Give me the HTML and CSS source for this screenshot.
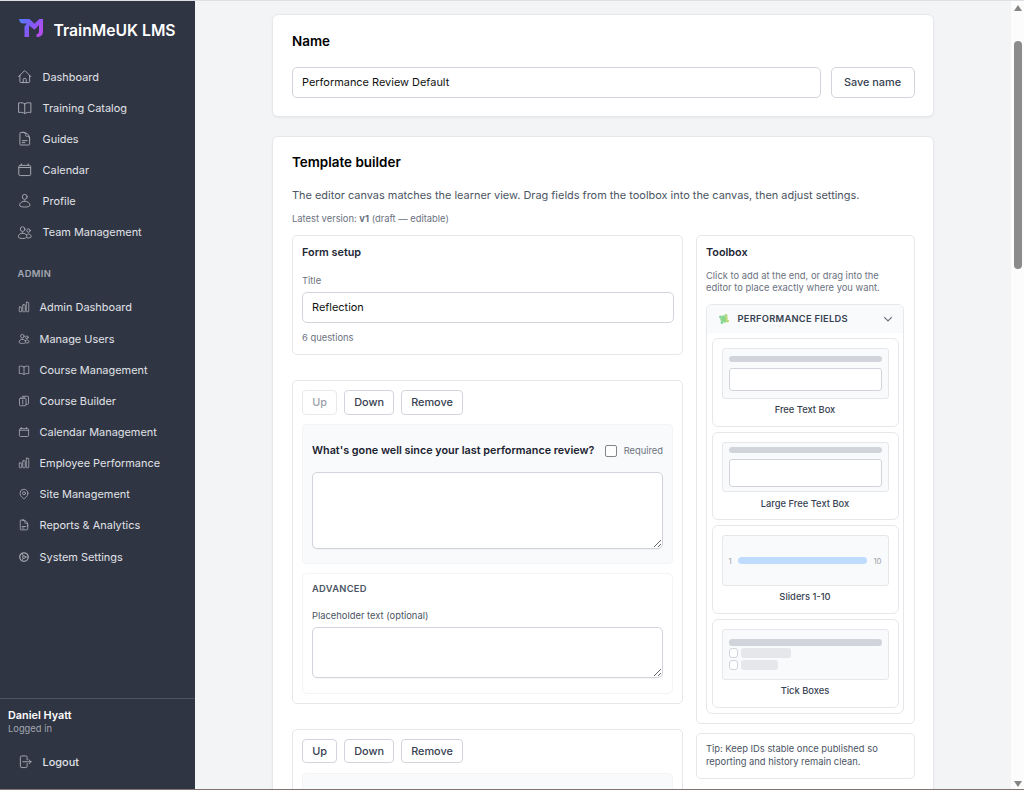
FILE: index.html
```html
<!DOCTYPE html>
<html lang="en">
<head>
    <meta charset="UTF-8">
    <meta name="viewport" content="width=device-width, initial-scale=1.0">
    <title>TrainMeUK LMS - Template builder</title>
    <link rel="stylesheet" href="styles.css">
</head>
<body>
    <!-- Icons -->
    <svg class="sprite" xmlns="http://www.w3.org/2000/svg">
        <symbol id="home" viewBox="0 0 24 24"><path d="M2.3 12 11.2 3q.8-.7 1.6 0l8.9 9M4.5 9.800v10q0 1.200 1.200 1.200h4v-5q0-1.200 1.200-1.200h2.200q1.200 0 1.200 1.200v5h4q1.200 0 1.200-1.200v-10M8.200 21h8.200"/></symbol>
        <symbol id="book" viewBox="0 0 24 24"><path d="M12 6C10 4.500 6 3.700 2.500 4.500v14.800C6 18.500 10 19.300 12 21c2-1.700 6-2.500 9.500-1.700V4.500C18 3.700 14 4.500 12 6zv15"/></symbol>
        <symbol id="doc" viewBox="0 0 24 24"><path d="M19.500 14.200v-2.600a3.400 3.400 0 0 0-3.400-3.400h-1.500a1.100 1.100 0 0 1-1.100-1.100V5.600a3.400 3.400 0 0 0-3.400-3.400H8.200M8.200 15h7.500m-7.500 3H12M10.500 2.200H5.600c-.6 0-1.100.5-1.100 1.100v17.300c0 .6.500 1.100 1.100 1.100h12.800c.6 0 1.100-.5 1.100-1.100v-9.400a9 9 0 0 0-9-9z"/></symbol>
        <symbol id="calendar" viewBox="0 0 24 24"><path d="M6.700 3v2.200M17.300 3v2.200M3 8.500h18M5 5.200h14q2.200 0 2.200 2.200v11.400q0 2.200-2.200 2.200H5q-2.200 0-2.200-2.200V7.400Q2.800 5.200 5 5.200z"/></symbol>
        <symbol id="user" viewBox="0 0 24 24"><circle cx="12" cy="6" r="3.800"/><path d="M12 12.600c-4.500 0-8 3-8 6.500 0 1.700 3.500 2.600 8 2.600s8-.9 8-2.600c0-3.500-3.500-6.500-8-6.500z"/></symbol>
        <symbol id="users" viewBox="0 0 24 24"><circle cx="8.700" cy="6.400" r="3.600"/><circle cx="17.800" cy="8.600" r="2.600"/><path d="M8.700 12.500c-3.700 0-6.600 2.500-6.600 5.700 0 3.600 13.200 3.600 13.200 0 0-3.200-2.900-5.700-6.600-5.700zM16 20c3 .2 6-.2 6-2 0-2.300-2-4-4.200-4q-1.800 0-3.200 1.200"/></symbol>
        <symbol id="chart" viewBox="0 0 24 24"><rect x="2.500" y="12" width="5" height="9.500" rx="1"/><rect x="9.500" y="7.500" width="5" height="14" rx="1"/><rect x="16.500" y="2.500" width="5" height="19" rx="1"/></symbol>
        <symbol id="builder" viewBox="0 0 24 24"><path d="M8 6.500V4.200q0-1.700 1.700-1.700h9.600Q21 2.500 21 4.200v12.600q0 1.700-1.700 1.700H16M4.500 6.500h9.800q1.700 0 1.700 1.700v11.600q0 1.700-1.700 1.700H4.700Q3 21.500 3 19.800V8.200q0-1.700 1.500-1.700zM12 6.500V3M9.500 10v8"/></symbol>
        <symbol id="pin" viewBox="0 0 24 24"><circle cx="12" cy="10.500" r="3"/><path d="M20 10.500c0 7.100-8 11.200-8 11.200s-8-4.100-8-11.200a8 8 0 1 1 16 0z"/></symbol>
        <symbol id="cog" viewBox="0 0 24 24"><circle cx="12" cy="12" r="8.500" stroke-width="2.500"/><circle cx="12" cy="12" r="2.800"/><path d="M14.800 12H20M10.500 9.500 8 5.200M10.500 14.500 8 18.800"/></symbol>
        <symbol id="logout" viewBox="0 0 24 24"><path d="M15.700 9V5.200Q15.700 3 13.500 3h-6Q5.200 3 5.200 5.200v13.600Q5.200 21 7.500 21h6q2.200 0 2.200-2.200V15M18.700 15l3-3-3-3M21.700 12H9"/></symbol>
    </svg>

    <div class="layout">
        <!-- Sidebar -->
        <aside class="sidebar">
            <div class="brand">
                <svg class="logo" viewBox="0 0 24 18">
                    <defs>
                        <linearGradient id="brand-gradient" x1="0" y1="0" x2="1" y2="0.500">
                            <stop offset="0" stop-color="#4f7df9"/>
                            <stop offset="0.500" stop-color="#7c5cf8"/>
                            <stop offset="1" stop-color="#b44df0"/>
                        </linearGradient>
                    </defs>
                    <path fill="url(#brand-gradient)" d="M0 0h10.500l5 4.800L20.300 0H24v12c0 4-2.200 6-6.500 6v-2.500c1.800-.5 2.500-1.500 2.500-3.500V6l-4.500 4.800L10 6.500V18H5.500V7.500L8 4.500H4C1.500 4.500.5 2.500 0 0z"/>
                </svg>
                <span>TrainMeUK LMS</span>
            </div>

            <nav class="nav">
                <a href="#"><svg><use href="#home"/></svg>Dashboard</a>
                <a href="#"><svg><use href="#book"/></svg>Training Catalog</a>
                <a href="#"><svg><use href="#doc"/></svg>Guides</a>
                <a href="#"><svg><use href="#calendar"/></svg>Calendar</a>
                <a href="#"><svg><use href="#user"/></svg>Profile</a>
                <a href="#"><svg><use href="#users"/></svg>Team Management</a>
            </nav>

            <h2 class="nav-heading">ADMIN</h2>
            <nav class="nav nav-admin">
                <a href="#"><svg><use href="#chart"/></svg>Admin Dashboard</a>
                <a href="#"><svg><use href="#users"/></svg>Manage Users</a>
                <a href="#"><svg><use href="#book"/></svg>Course Management</a>
                <a href="#"><svg><use href="#builder"/></svg>Course Builder</a>
                <a href="#"><svg><use href="#calendar"/></svg>Calendar Management</a>
                <a href="#"><svg><use href="#chart"/></svg>Employee Performance</a>
                <a href="#"><svg><use href="#pin"/></svg>Site Management</a>
                <a href="#"><svg><use href="#doc"/></svg>Reports &amp; Analytics</a>
                <a href="#"><svg><use href="#cog"/></svg>System Settings</a>
            </nav>

            <div class="account">
                <strong>Daniel Hyatt</strong>
                <small>Logged in</small>
                <nav class="nav">
                    <a href="#"><svg><use href="#logout"/></svg>Logout</a>
                </nav>
            </div>
        </aside>

        <!-- Page content -->
        <main class="content">
            <section class="card name-card">
                <h1>Name</h1>
                <div class="name-row">
                    <input class="input" type="text" value="Performance Review Default">
                    <button class="btn btn-save">Save name</button>
                </div>
            </section>

            <section class="card builder-card">
                <h1>Template builder</h1>
                <p class="intro">The editor canvas matches the learner view. Drag fields from the toolbox into the canvas, then adjust settings.</p>
                <p class="version">Latest version: <b>v1</b> (draft — editable)</p>

                <div class="builder">
                    <div class="canvas">
                        <div class="panel setup">
                            <h3>Form setup</h3>
                            <label class="label">Title</label>
                            <input class="input" type="text" value="Reflection">
                            <p class="count">6 questions</p>
                        </div>

                        <div class="panel question">
                            <div class="actions">
                                <button class="btn" disabled>Up</button>
                                <button class="btn">Down</button>
                                <button class="btn">Remove</button>
                            </div>
                            <div class="preview">
                                <div class="preview-head">
                                    <span class="question-text">What's gone well since your last performance review?</span>
                                    <label class="required"><input type="checkbox">Required</label>
                                </div>
                                <textarea class="answer"></textarea>
                            </div>
                            <div class="advanced">
                                <h4>ADVANCED</h4>
                                <label class="label">Placeholder text (optional)</label>
                                <textarea class="placeholder-text"></textarea>
                            </div>
                        </div>

                        <div class="panel question">
                            <div class="actions">
                                <button class="btn">Up</button>
                                <button class="btn">Down</button>
                                <button class="btn">Remove</button>
                            </div>
                            <div class="preview"></div>
                        </div>
                    </div>

                    <div class="side">
                        <div class="panel toolbox">
                            <h3>Toolbox</h3>
                            <p class="hint">Click to add at the end, or drag into the editor to place exactly where you want.</p>
                            <div class="group">
                                <div class="group-head">
                                    <svg class="puzzle" viewBox="0 0 12 12">
                                        <g transform="rotate(30 6 6)">
                                            <rect x="3" y="3" width="6" height="6" rx="0.500" fill="#8cd68c"/>
                                            <circle cx="6" cy="1.900" r="1.500" fill="#a5d879"/>
                                            <circle cx="10.100" cy="6" r="1.500" fill="#b5d877"/>
                                            <circle cx="6" cy="10.100" r="1.400" fill="#7fd394"/>
                                            <circle cx="1.900" cy="6" r="1.400" fill="#7fd394"/>
                                            <path d="M6 3h3v3.500z" fill="#d3d977"/>
                                        </g>
                                    </svg>
                                    <span>PERFORMANCE FIELDS</span>
                                    <svg class="chevron" viewBox="0 0 10 10"><path d="m1.200 3.200 3.800 3.800 3.800-3.800"/></svg>
                                </div>
                                <div class="fields">
                                    <div class="field">
                                        <div class="thumb">
                                            <div class="bar"></div>
                                            <div class="box"></div>
                                        </div>
                                        <span>Free Text Box</span>
                                    </div>
                                    <div class="field">
                                        <div class="thumb">
                                            <div class="bar"></div>
                                            <div class="box box-large"></div>
                                        </div>
                                        <span>Large Free Text Box</span>
                                    </div>
                                    <div class="field">
                                        <div class="thumb thumb-slider">
                                            <small>1</small>
                                            <div class="track"></div>
                                            <small>10</small>
                                        </div>
                                        <span>Sliders 1-10</span>
                                    </div>
                                    <div class="field">
                                        <div class="thumb thumb-ticks">
                                            <div class="bar"></div>
                                            <div class="tick"><i></i><b></b></div>
                                            <div class="tick tick-short"><i></i><b></b></div>
                                        </div>
                                        <span>Tick Boxes</span>
                                    </div>
                                </div>
                            </div>
                        </div>
                        <div class="panel tip">Tip: Keep IDs stable once published so reporting and history remain clean.</div>
                    </div>
                </div>
            </section>
        </main>

        <!-- Scrollbar -->
        <div class="scrollbar">
            <div class="arrow arrow-up"></div>
            <div class="thumb-bar"></div>
            <div class="arrow arrow-down"></div>
        </div>
    </div>
</body>
</html>
```
FILE: styles.css
```css
* {
    box-sizing: border-box;
    margin: 0;
    padding: 0;
}

body {
    font-family: Inter, "Liberation Sans", sans-serif;
    font-size: 10.950px;
    line-height: 16px;
    color: #111827;
    background-color: #f3f4f6;
    overflow: hidden;
}

input, textarea, button {
    font: inherit;
    color: inherit;
}

.sprite {
    display: none;
}

.layout {
    display: flex;
    height: 790px;
    overflow: hidden;
    border-top: 1px solid #dfe0e6;
    border-bottom: 1px solid #80736f;
}

/* Sidebar */
.sidebar {
    display: flex;
    flex-direction: column;
    flex: none;
    width: 195px;
    background-color: #2f3543;
    color: #e5e7eb;
}

.brand {
    display: flex;
    align-items: center;
    gap: 10.500px;
    height: 57px;
    padding: 2px 0 0 19px;
    font-size: 15.700px;
    font-weight: 600;
    color: #fff;
    white-space: nowrap;
}

.logo {
    width: 24px;
    height: 18px;
    margin-bottom: 5px;
}

.nav {
    display: flex;
    flex-direction: column;
    padding-top: 3px;
}

.nav a {
    display: flex;
    align-items: center;
    gap: 10px;
    height: 31.150px;
    padding-left: 17px;
    color: #e0e2e7;
    font-size: 10.950px;
    text-decoration: none;
    white-space: nowrap;
}

.nav svg {
    width: 15.500px;
    height: 15.500px;
    fill: none;
    stroke: #a5a9b2;
    stroke-width: 1.500;
    stroke-linecap: round;
    stroke-linejoin: round;
}

.nav-heading {
    margin-top: 18px;
    padding-left: 17.500px;
    font-size: 9.400px;
    font-weight: 600;
    letter-spacing: 0.350px;
    color: #a3a7b1;
}

.nav-admin {
    padding-top: 10px;
}

.nav-admin a {
    padding-left: 17.500px;
}

.nav-admin svg {
    width: 12px;
    height: 12px;
    stroke-width: 1.700;
}

.account {
    margin-top: auto;
    height: 91px;
    padding-top: 9px;
    border-top: 1px solid #4b5260;
}

.account strong,
.account small {
    display: block;
    padding-left: 8px;
}

.account strong {
    font-size: 10.850px;
    font-weight: 600;
    line-height: 15px;
    color: #fff;
}

.account small {
    font-size: 9.350px;
    line-height: 12px;
    color: #a3a7b1;
}

.account .nav {
    padding-top: 11px;
}

.account .nav a {
    font-weight: 500;
}

/* Cards */
.content {
    flex: 1;
    min-width: 0;
    padding: 13px 77.500px 0 77px;
}

.card {
    background: #fff;
    border: 1px solid #e5e7eb;
    border-radius: 6px;
    box-shadow: 0 1px 2px rgba(0, 0, 0, 0.05);
    padding: 0 17.500px 0 19px;
}

.name-card {
    height: 103px;
    padding-top: 15px;
    margin-bottom: 19px;
}

.builder-card {
    height: 700px;
    padding-top: 14px;
}

h1 {
    font-size: 13.450px;
    font-weight: 600;
    line-height: 22px;
    color: #000;
}

h3 {
    font-size: 10.850px;
    font-weight: 600;
    line-height: 15px;
    color: #1f2937;
}

.name-row {
    display: flex;
    gap: 10px;
    margin-top: 15px;
}

.input {
    width: 100%;
    height: 31px;
    padding: 0 9px 1px;
    background: #fff;
    border: 1px solid #d1d5db;
    border-radius: 5px;
    color: #111;
}

.btn {
    flex: none;
    height: 24.500px;
    padding: 0 9.300px;
    background: #fff;
    border: 1px solid #d1d5db;
    border-radius: 4px;
    color: #374151;
    font-size: 10.900px;
    font-weight: 500;
    line-height: 16px;
}

.btn:disabled {
    opacity: 0.500;
}

.btn-save {
    width: 84px;
    height: 31px;
    padding: 0 1px 1px 0;
    border-radius: 5px;
}

.intro {
    margin-top: 14px;
    font-size: 10.950px;
    color: #4b5563;
    white-space: nowrap;
}

.version {
    margin-top: 9px;
    font-size: 9.370px;
    line-height: 14px;
    color: #6b7280;
}

/* Builder */
.builder {
    display: grid;
    grid-template-columns: 391px 219px;
    gap: 13px;
    margin-top: 9px;
}

.panel {
    background: #fff;
    border: 1px solid #e5e7eb;
    border-radius: 5px;
    padding: 9px;
}

.setup {
    height: 120px;
    margin-bottom: 25px;
    padding-right: 8.500px;
}

.label {
    display: block;
    margin-top: 14px;
    font-size: 9.370px;
    line-height: 13px;
    color: #6b7280;
}

.setup .input {
    margin-top: 5px;
}

.count {
    margin-top: 8px;
    font-size: 9.370px;
    line-height: 14px;
    color: #6b7280;
}

.question {
    height: 324px;
    margin-bottom: 24.500px;
    padding-top: 9px;
}

.actions {
    display: flex;
    gap: 6.500px;
}

.preview {
    height: 139.500px;
    margin-top: 9.500px;
    padding: 9px;
    background: #f9fafb;
    border: 1px solid #f3f4f6;
    border-radius: 4px;
}

.preview-head {
    display: flex;
    justify-content: space-between;
    align-items: center;
    height: 33px;
}

.question-text {
    font-size: 10.820px;
    font-weight: 600;
    color: #1a2230;
    white-space: nowrap;
}

.required {
    display: flex;
    align-items: center;
    gap: 6.500px;
    font-size: 9.350px;
    color: #6b7280;
}

.required input {
    appearance: none;
    width: 12px;
    height: 12px;
    background: #fff;
    border: 1px solid #858585;
    border-radius: 2px;
}

textarea {
    display: block;
    width: 100%;
    background: #fff;
    border: 1px solid #d1d5db;
    border-radius: 5px;
    box-shadow: 0 1px 1px rgba(0, 0, 0, 0.04);
    resize: vertical;
}

.answer {
    height: 76.500px;
    margin-top: 5px;
}

.advanced {
    height: 121px;
    margin-top: 9.500px;
    padding: 7px 9px;
    border: 1px solid #f3f4f6;
    border-radius: 5px;
}

.advanced h4 {
    font-size: 9.350px;
    font-weight: 600;
    line-height: 15px;
    letter-spacing: 0.300px;
    color: #4b5563;
}

.advanced .label {
    margin-top: 13px;
    color: #4b5563;
}

.placeholder-text {
    height: 51px;
    margin-top: 5px;
}

/* Toolbox */
.toolbox {
    height: 489px;
}

.hint {
    margin-top: 10px;
    font-size: 9.400px;
    line-height: 12px;
    color: #6b7280;
}

.group {
    width: 198px;
    height: 410px;
    margin-top: 10px;
    border: 1px solid #e5e7eb;
    border-radius: 6px;
    overflow: hidden;
}

.group-head {
    display: flex;
    align-items: center;
    height: 28px;
    padding: 0 10px 0 11px;
    background: #f9fafb;
    font-size: 9.350px;
    font-weight: 600;
    letter-spacing: 0.250px;
    color: #374151;
}

.puzzle {
    width: 12px;
    height: 12px;
    margin-right: 7.500px;
}

.chevron {
    width: 10px;
    height: 10px;
    margin-left: auto;
    fill: none;
    stroke: #6b7280;
    stroke-width: 1.200;
}

.fields {
    display: flex;
    flex-direction: column;
    gap: 5px;
    padding: 5px 4.500px;
}

.field {
    height: 88.700px;
    padding: 9px;
    border: 1px solid #e5e7eb;
    border-radius: 6px;
    text-align: center;
    font-size: 9.350px;
    font-weight: 500;
    color: #374151;
}

.field > span {
    display: block;
    margin-top: 3.500px;
}

.thumb {
    display: flex;
    flex-direction: column;
    justify-content: center;
    gap: 6px;
    height: 50.500px;
    padding: 0 6px;
    background: #f9fafb;
    border: 1px solid #e5e7eb;
    border-radius: 3px;
}

.bar {
    height: 6.500px;
    background: #d1d5db;
    border-radius: 3px;
}

.box {
    height: 23px;
    background: #fff;
    border: 1px solid #d1d5db;
    border-radius: 3px;
}

.box-large {
    height: 28px;
}

.thumb-slider {
    flex-direction: row;
    align-items: center;
}

.thumb-slider small {
    font-size: 7.800px;
    font-weight: 400;
    color: #9ca3af;
}

.track {
    flex: 1;
    height: 7px;
    background: #bfdbfe;
    border-radius: 4px;
}

.thumb-ticks {
    gap: 2.500px;
}

.tick {
    display: flex;
    gap: 2.500px;
}

.tick i {
    width: 9.500px;
    height: 9.500px;
    background: #fff;
    border: 1px solid #d1d5db;
    border-radius: 3px;
}

.tick b {
    width: 50px;
    height: 9.500px;
    background: #e5e7eb;
    border-radius: 3px;
}

.tick-short b {
    width: 37px;
}

.tip {
    height: 46px;
    margin-top: 9px;
    padding-top: 8px;
    font-size: 9.370px;
    line-height: 13px;
    color: #4b5563;
}

/* Scrollbar */
.scrollbar {
    display: flex;
    flex-direction: column;
    align-items: center;
    flex: none;
    width: 13px;
    padding: 4px 0 2px;
    background: #fcfcfc;
}

.arrow {
    border: 4px solid transparent;
}

.arrow-up {
    border-top: 0;
    border-bottom: 6px solid #858585;
}

.arrow-down {
    margin-top: auto;
    border-bottom: 0;
    border-top: 6px solid #858585;
}

.thumb-bar {
    width: 8px;
    height: 228px;
    margin-top: 30px;
    background: #8b8b8b;
    border-radius: 4px;
}
```
